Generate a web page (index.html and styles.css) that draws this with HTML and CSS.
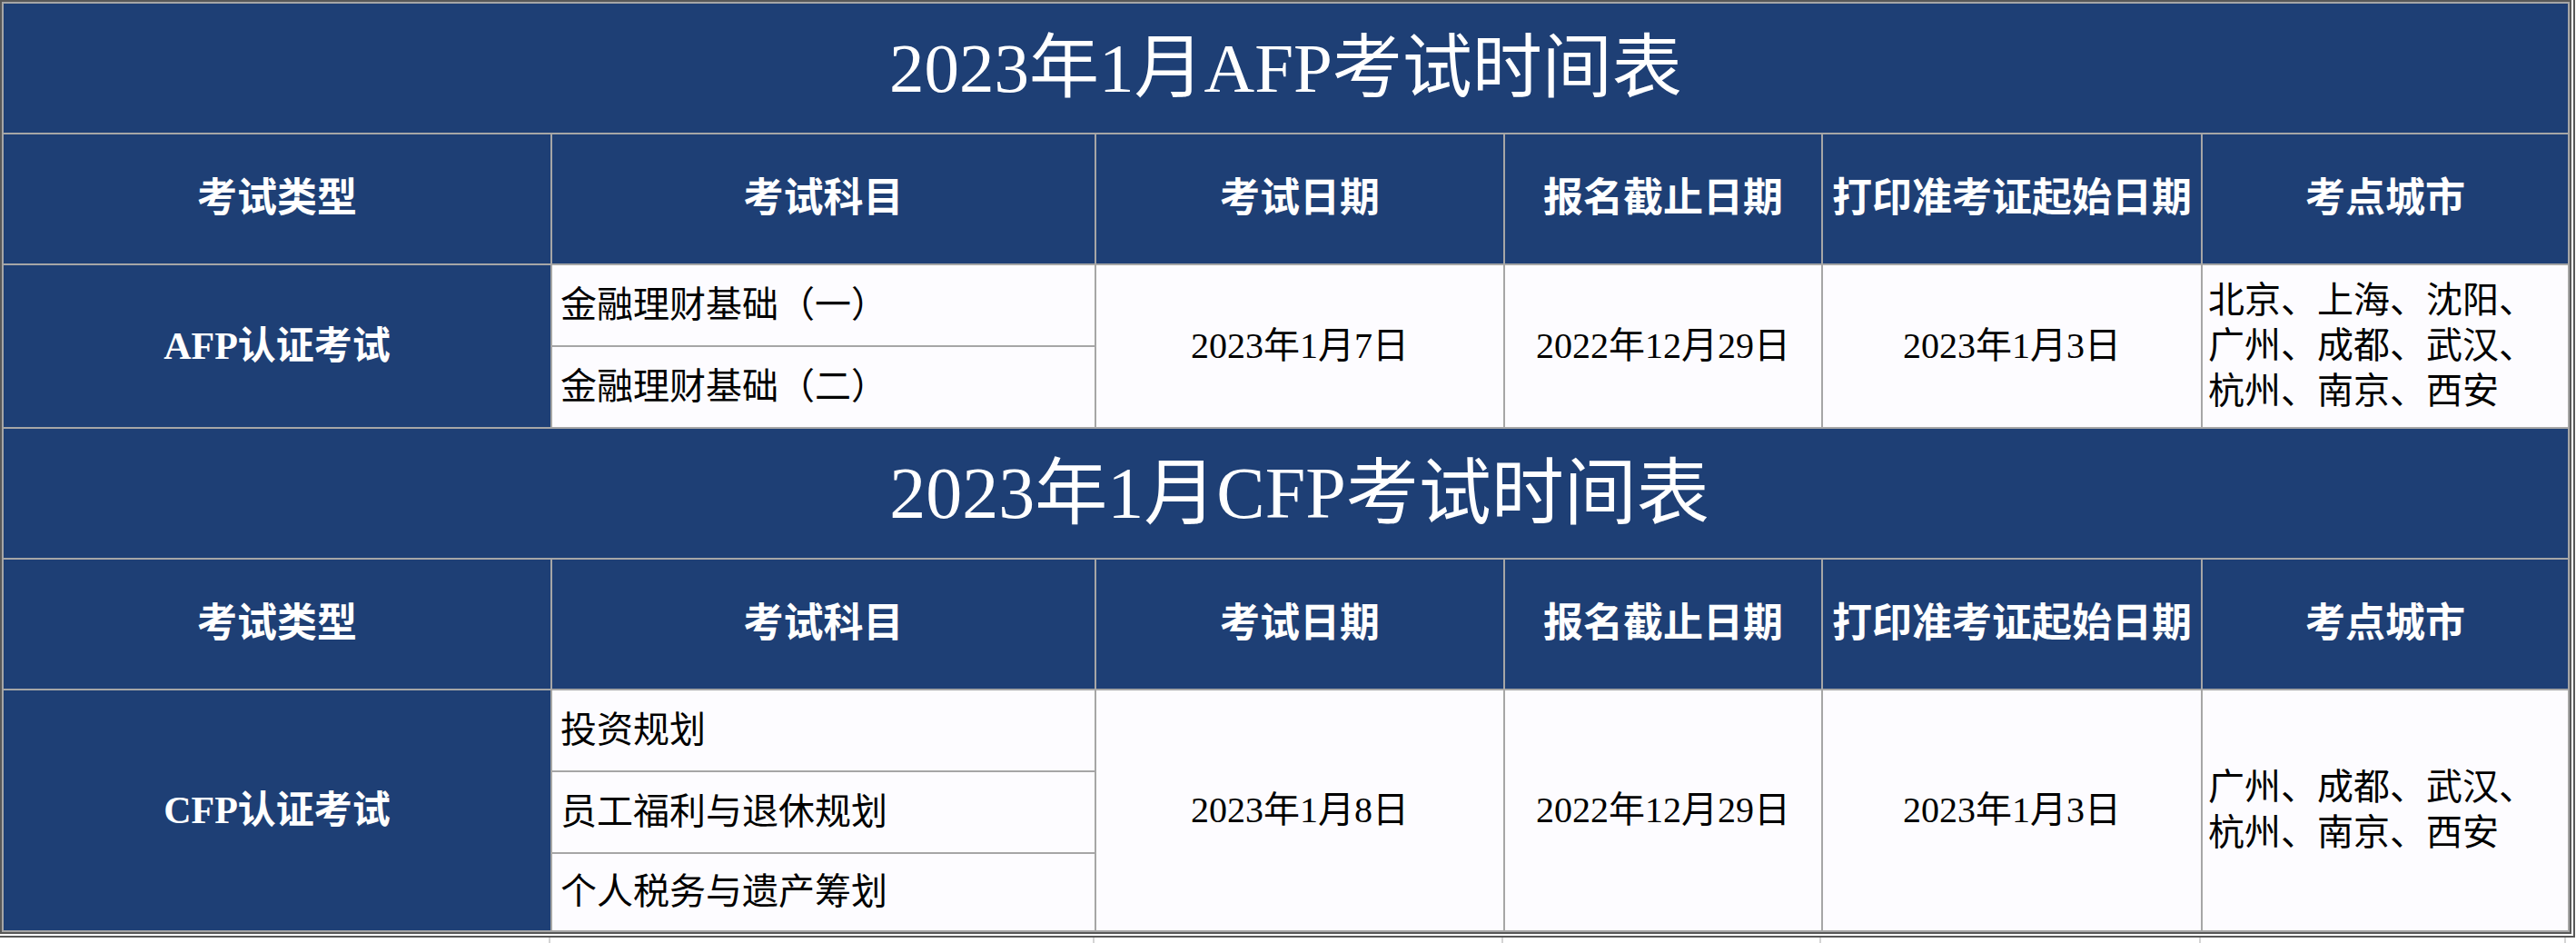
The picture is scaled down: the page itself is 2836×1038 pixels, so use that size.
FILE: index.html
```html
<!DOCTYPE html>
<html lang="zh-CN">
<head>
<meta charset="utf-8">
<title>2023年1月AFP/CFP考试时间表</title>
<link rel="stylesheet" href="styles.css">
</head>
<body>
<div class="frame-outer">
  <div class="frame">
    <div class="sheet">
      <div class="title">2023年1月AFP考试时间表</div>
      <div class="head">考试类型</div>
      <div class="head">考试科目</div>
      <div class="head">考试日期</div>
      <div class="head">报名截止日期</div>
      <div class="head">打印准考证起始日期</div>
      <div class="head">考点城市</div>

      <div class="type span2">AFP认证考试</div>
      <div class="cell subj">金融理财基础（一）</div>
      <div class="cell center span2">2023年1月7日</div>
      <div class="cell center span2">2022年12月29日</div>
      <div class="cell center span2">2023年1月3日</div>
      <div class="cell city span2">北京、上海、沈阳、广州、成都、武汉、杭州、南京、西安</div>
      <div class="cell subj">金融理财基础（二）</div>

      <div class="title title2">2023年1月CFP考试时间表</div>
      <div class="head">考试类型</div>
      <div class="head">考试科目</div>
      <div class="head">考试日期</div>
      <div class="head">报名截止日期</div>
      <div class="head">打印准考证起始日期</div>
      <div class="head">考点城市</div>

      <div class="type span3">CFP认证考试</div>
      <div class="cell subj">投资规划</div>
      <div class="cell center span3">2023年1月8日</div>
      <div class="cell center span3">2022年12月29日</div>
      <div class="cell center span3">2023年1月3日</div>
      <div class="cell city span3">广州、成都、武汉、杭州、南京、西安</div>
      <div class="cell subj">员工福利与退休规划</div>
      <div class="cell subj">个人税务与遗产筹划</div>
    </div>
  </div>
</div>
<div class="below">
  <div class="bcol"></div><div class="bcol"></div><div class="bcol"></div><div class="bcol"></div><div class="bcol"></div><div class="bcol"></div>
</div>
</body>
</html>
```

FILE: styles.css
```css
html, body {
  margin: 0;
  padding: 0;
  background: #ffffff;
}

body {
  font-family: "Liberation Serif", "Noto Sans CJK SC", serif;
  width: 2836px;
  height: 1038px;
  overflow: hidden;
}

.frame-outer {
  width: max-content;
  padding: 0 2px 2px 0;
  border-right: 2px solid #585858;
  border-bottom: 2px solid #585858;
}

.frame {
  border: 2px solid #585858;
}

.sheet {
  display: grid;
  grid-template-columns: 602px 597px 448px 348px 416px 402px;
  grid-template-rows: 142px 142px 88px 88px 142px 142px 88px 88px 84px;
  gap: 2px;
  padding: 2px;
  background: #a6a6a6;
}

.title {
  grid-column: 1 / -1;
  background: #1e3f75;
  color: #ffffff;
  font-size: 77px;
  line-height: 1;
  display: flex;
  align-items: center;
  justify-content: center;
}

.title2 {
  font-size: 80px;
  padding-left: 30px;
}

.head {
  background: #1e3f75;
  color: #ffffff;
  font-weight: bold;
  font-size: 44px;
  line-height: 1;
  display: flex;
  align-items: center;
  justify-content: center;
}

.type {
  grid-column: 1;
  background: #1e3f75;
  color: #ffffff;
  font-weight: bold;
  font-size: 42px;
  line-height: 1;
  display: flex;
  align-items: center;
  justify-content: center;
}

.cell {
  background: #fdfcff;
  color: #000000;
  font-size: 40px;
  line-height: 50px;
  display: flex;
  align-items: center;
}

.center {
  justify-content: center;
}

.subj {
  grid-column: 2;
  padding-left: 9px;
}

.city {
  padding-left: 6px;
  padding-right: 2px;
}

.span2 {
  grid-row: span 2;
}

.span3 {
  grid-row: span 3;
}

.below {
  display: grid;
  grid-template-columns: 606px 599px 450px 350px 418px 402px;
  height: 12px;
}

.bcol {
  border-right: 2px solid #d4d4d4;
}
```
